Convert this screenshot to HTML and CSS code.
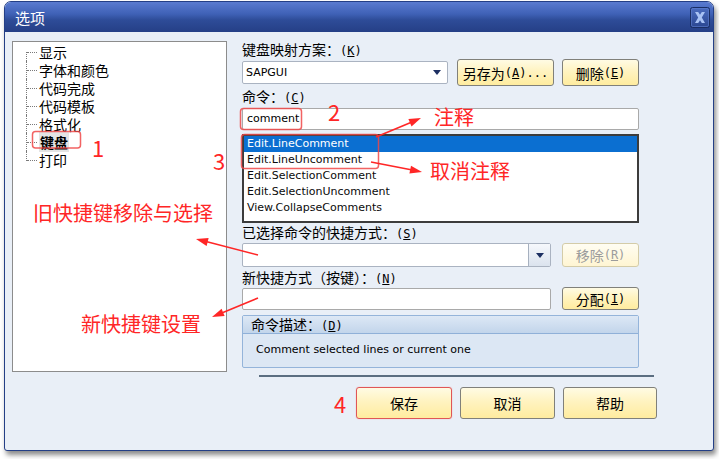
FILE: index.html
```html
<!DOCTYPE html>
<html lang="zh-CN">
<head>
<meta charset="utf-8">
<title>选项</title>
<link rel="stylesheet" href="styles.css">
</head>
<body>
<div class="window">
  <div class="titlebar">
    <span class="title">选项</span>
    <span class="close" aria-label="关闭">
      <svg width="20" height="21" viewBox="0 0 20 21">
        <defs>
          <linearGradient id="cg" x1="0" y1="0" x2="0" y2="1">
            <stop offset="0" stop-color="#4a6cc0"/>
            <stop offset="1" stop-color="#2a4690"/>
          </linearGradient>
        </defs>
        <rect x="0.5" y="0.5" width="19" height="20" rx="2" fill="url(#cg)" stroke="#1a2e64"/>
        <rect x="1.5" y="1.5" width="17" height="18" rx="1.5" fill="none" stroke="#5f7fcf" stroke-opacity="0.6"/>
        <path d="M5 5 L8.2 5 L10 7.8 L11.8 5 L15 5 L11.8 10.5 L15 16 L11.8 16 L10 13.2 L8.2 16 L5 16 L8.2 10.5 Z" fill="#a8c2f4"/>
      </svg>
    </span>
  </div>
  <div class="body">
    <div class="main">
      <div class="tree">
        <ul class="tree-list">
          <li>显示</li>
          <li>字体和颜色</li>
          <li>代码完成</li>
          <li>代码模板</li>
          <li>格式化</li>
          <li><span class="sel">键盘</span></li>
          <li>打印</li>
        </ul>
      </div>
      <div class="form">
        <div class="label l1">键盘映射方案：<span class="mn">(<u>K</u>)</span></div>
        <div class="row r1">
          <div class="combo c1"><span class="val">SAPGUI</span><span class="tri"></span></div>
          <button class="btn b-saveas">另存为<span class="mn">(<u>A</u>)...</span></button>
          <button class="btn b-del">删除<span class="mn">(<u>E</u>)</span></button>
        </div>
        <div class="label l2">命令：<span class="mn">(<u>C</u>)</span></div>
        <div class="input i1">comment</div>
        <ul class="list">
          <li class="on">Edit.LineComment</li>
          <li>Edit.LineUncomment</li>
          <li>Edit.SelectionComment</li>
          <li>Edit.SelectionUncomment</li>
          <li>View.CollapseComments</li>
        </ul>
        <div class="label l3">已选择命令的快捷方式：<span class="mn">(<u>S</u>)</span></div>
        <div class="row r3">
          <div class="combo c2"><span class="val"></span><span class="drop"><span class="tri"></span></span></div>
          <button class="btn disabled">移除<span class="mn">(<u>R</u>)</span></button>
        </div>
        <div class="label l4">新快捷方式（按键）：<span class="mn">(<u>N</u>)</span></div>
        <div class="row r4">
          <div class="input i2"></div>
          <button class="btn b-assign">分配<span class="mn">(<u>I</u>)</span></button>
        </div>
        <div class="group">
          <div class="group-head">命令描述：<span class="mn">(<u>D</u>)</span></div>
          <div class="group-body">Comment selected lines or current one</div>
        </div>
      </div>
    </div>
    <div class="sep"></div>
    <div class="actions">
      <button class="btn big save">保存</button>
      <button class="btn big cancel">取消</button>
      <button class="btn big help">帮助</button>
    </div>
  </div>
</div>

<div class="overlay">
  <svg class="marks" width="719" height="459" viewBox="0 0 719 459">
    <g fill="none" stroke="#f04848" stroke-opacity="0.85" stroke-width="1.5">
      <rect x="32.5" y="131.5" width="48" height="16.5" rx="3"/>
      <rect x="240.5" y="108.5" width="61" height="21" rx="3"/>
      <rect x="241.5" y="134.5" width="137" height="34" rx="3"/>
    </g>
    <g stroke="#ff2626" stroke-width="1.6" fill="none">
      <line x1="376" y1="137" x2="412" y2="122"/>
      <line x1="371" y1="162" x2="411" y2="169.8"/>
      <line x1="258" y1="255" x2="207" y2="241.8"/>
      <line x1="258" y1="298" x2="223" y2="312.5"/>
    </g>
    <g fill="#ff2626">
      <polygon points="421,118 411.5,126.4 408.4,119"/>
      <polygon points="422,172 409.4,173.6 411,165.8"/>
      <polygon points="196,239 208.6,238.1 206.6,245.9"/>
      <polygon points="212,317 221.6,308.7 224.6,316.1"/>
    </g>
  </svg>
  <span class="note n-zhushi">注释</span>
  <span class="note n-quxiao">取消注释</span>
  <span class="note n-old">旧快捷键移除与选择</span>
  <span class="note n-new">新快捷键设置</span>
  <span class="num d1">1</span>
  <span class="num d2">2</span>
  <span class="num d3">3</span>
  <span class="num d4">4</span>
</div>
</body>
</html>
```

FILE: styles.css
```css
* { box-sizing: border-box; }

html, body {
  margin: 0;
  padding: 0;
}

body {
  width: 719px;
  height: 459px;
  overflow: hidden;
  position: relative;
  background: #ffffff;
  font-family: "Noto Sans CJK SC", "Noto Sans", sans-serif;
  font-size: 14px;
  color: #000;
}

.window {
  margin: 1px 0 0 4px;
  width: 710px;
  height: 450px;
  border: 1px solid #243f86;
  border-radius: 7px 7px 3px 3px;
  background: #e9eff7;
  box-shadow: 2px 4px 5px rgba(0, 0, 0, 0.45);
  display: flex;
  flex-direction: column;
  overflow: hidden;
}

.titlebar {
  flex: none;
  height: 30px;
  display: flex;
  align-items: center;
  justify-content: space-between;
  padding: 1px 3px 0 10px;
  background: linear-gradient(#5a7bd0 0%, #3f61b6 40%, #2e4c98 60%, #253f86 100%);
}

.title {
  color: #fff;
  font-size: 15px;
  line-height: 20px;
}

.close {
  display: flex;
  width: 20px;
  height: 21px;
}

.body {
  flex: 1;
  padding: 9px 7px 0 7px;
  display: flex;
  flex-direction: column;
}

.main {
  display: flex;
  gap: 15px;
  height: 331px;
}

/* tree */
.tree {
  width: 215px;
  height: 331px;
  background: #fff;
  border: 1px solid #8c8c8c;
}

.tree-list {
  list-style: none;
  margin: 0;
  padding: 1px 0 0 13px;
}

.tree-list li {
  position: relative;
  height: 18px;
  line-height: 18px;
  padding-left: 13px;
  white-space: nowrap;
}

.tree-list li::before {
  content: "";
  position: absolute;
  left: 0;
  top: 0;
  height: 18px;
  border-left: 1px dotted #7a7a7a;
}

.tree-list li:first-child::before {
  top: 9px;
  height: 9px;
}

.tree-list li:last-child::before {
  height: 10px;
}

.tree-list li::after {
  content: "";
  position: absolute;
  left: 1px;
  top: 9px;
  width: 10px;
  border-top: 1px dotted #7a7a7a;
}

.tree-list .sel {
  font-weight: bold;
  background: #e4e4e4;
  padding: 0 1px;
}

/* form */
.form {
  width: 397px;
  display: flex;
  flex-direction: column;
}

.label {
  height: 17px;
  line-height: 17px;
  white-space: nowrap;
}

.mn {
  font-family: "DejaVu Sans Mono", monospace;
  font-size: 12px;
}

.l1 { margin-top: 0; }
.l2 { margin-top: 2px; }
.l3 { margin-top: 1px; }
.l4 { margin-top: 2px; }

.row {
  display: flex;
  align-items: center;
}

.r1 { margin-top: 1px; height: 27px; }
.r3 { margin-top: 2px; height: 24px; gap: 11px; }
.r4 { margin-top: 1px; height: 23px; gap: 11px; align-items: flex-end; }

.combo {
  position: relative;
  display: flex;
  align-items: center;
  background: #fff;
  border: 1px solid #aab3c1;
  border-radius: 2px;
  font-family: "DejaVu Sans", sans-serif;
  font-size: 11px;
}

.c1 {
  width: 206px;
  height: 23px;
  padding-left: 3px;
  justify-content: space-between;
  padding-right: 6px;
}

.tri {
  width: 0;
  height: 0;
  border-left: 4px solid transparent;
  border-right: 4px solid transparent;
  border-top: 5px solid #1d2f62;
}

.c2 {
  width: 309px;
  height: 24px;
  justify-content: space-between;
}

.drop {
  width: 22px;
  height: 22px;
  display: flex;
  align-items: center;
  justify-content: center;
  border-left: 1px solid #a6b0bf;
  background: linear-gradient(#f6f8fc, #dbe3ee);
}

.input {
  background: #fff;
  border: 1px solid #a9a9a9;
  border-radius: 2px;
  font-family: "DejaVu Sans", sans-serif;
  font-size: 11px;
  line-height: 20px;
  padding-left: 4px;
}

.i1 {
  margin-top: 3px;
  height: 22px;
}

.i2 {
  width: 309px;
  height: 22px;
}

.list {
  list-style: none;
  margin: 4px 0 0;
  padding: 0;
  height: 89px;
  background: #fff;
  border: 2px solid #3c3c3c;
  font-family: "DejaVu Sans", sans-serif;
  font-size: 11px;
}

.list li {
  height: 16px;
  line-height: 16px;
  padding-left: 3px;
  color: #0a0a0a;
}

.list li.on {
  background: #0b6fd1;
  color: #fff;
}

/* buttons */
.btn {
  font-family: "Noto Sans CJK SC", sans-serif;
  font-size: 14px;
  color: #000;
  border: 1px solid #80807a;
  border-radius: 3px;
  background: linear-gradient(#fffbe4 0%, #fff3c0 45%, #ffec9f 100%);
  padding: 0;
  margin: 0;
  line-height: 20px;
  white-space: nowrap;
  display: flex;
  align-items: center;
  justify-content: center;
}

.b-saveas {
  width: 97px;
  height: 27px;
  margin-left: 9px;
}

.b-del {
  width: 77px;
  height: 27px;
  margin-left: 8px;
}

.btn.disabled {
  width: 77px;
  height: 24px;
  color: #9c9c9c;
  border-color: #d4cca8;
  background: linear-gradient(#fffdf2, #fff5d2);
}

.b-assign {
  width: 77px;
  height: 23px;
}

/* group */
.group {
  margin-top: 5px;
  height: 53px;
  border: 1px solid #94b4da;
  border-radius: 2px;
  background: #dce7f4;
  display: flex;
  flex-direction: column;
}

.group-head {
  height: 18px;
  line-height: 17px;
  padding-left: 8px;
  border-bottom: 1px solid #8fb0d8;
  background: linear-gradient(#dde8f5, #c2d5eb);
}

.group-body {
  flex: 1;
  padding: 8px 0 0 13px;
  font-family: "DejaVu Sans", sans-serif;
  font-size: 11px;
  line-height: 16px;
}

/* bottom */
.sep {
  margin: 3px 0 0 247px;
  width: 395px;
  height: 2px;
  background: #5b6e81;
}

.actions {
  margin-top: 10px;
  padding-left: 344px;
  display: flex;
  gap: 8px;
}

.btn.big {
  height: 32px;
}

.save { width: 96px; border-color: #e05656; box-shadow: 0 0 1px rgba(230, 80, 80, 0.6); }
.cancel { width: 95px; }
.help { width: 94px; }

/* annotations */
.overlay {
  position: absolute;
  left: 0;
  top: 0;
  width: 719px;
  height: 459px;
  pointer-events: none;
}

.marks {
  position: absolute;
  left: 0;
  top: 0;
}

.note {
  position: absolute;
  color: #ff2626;
  font-family: "Noto Sans CJK SC", sans-serif;
  font-size: 20px;
  line-height: 20px;
  white-space: nowrap;
}

.n-zhushi { left: 434px; top: 107px; }
.n-quxiao { left: 430px; top: 161px; }
.n-old { left: 33px; top: 203px; }
.n-new { left: 81px; top: 314px; }

.num {
  position: absolute;
  color: #ff2626;
  font-family: "Noto Sans CJK SC", sans-serif;
  font-size: 22px;
  line-height: 22px;
}

.d1 { left: 92px; top: 136px; }
.d2 { left: 328px; top: 100px; }
.d3 { left: 213px; top: 149px; }
.d4 { left: 334px; top: 392px; }
```
